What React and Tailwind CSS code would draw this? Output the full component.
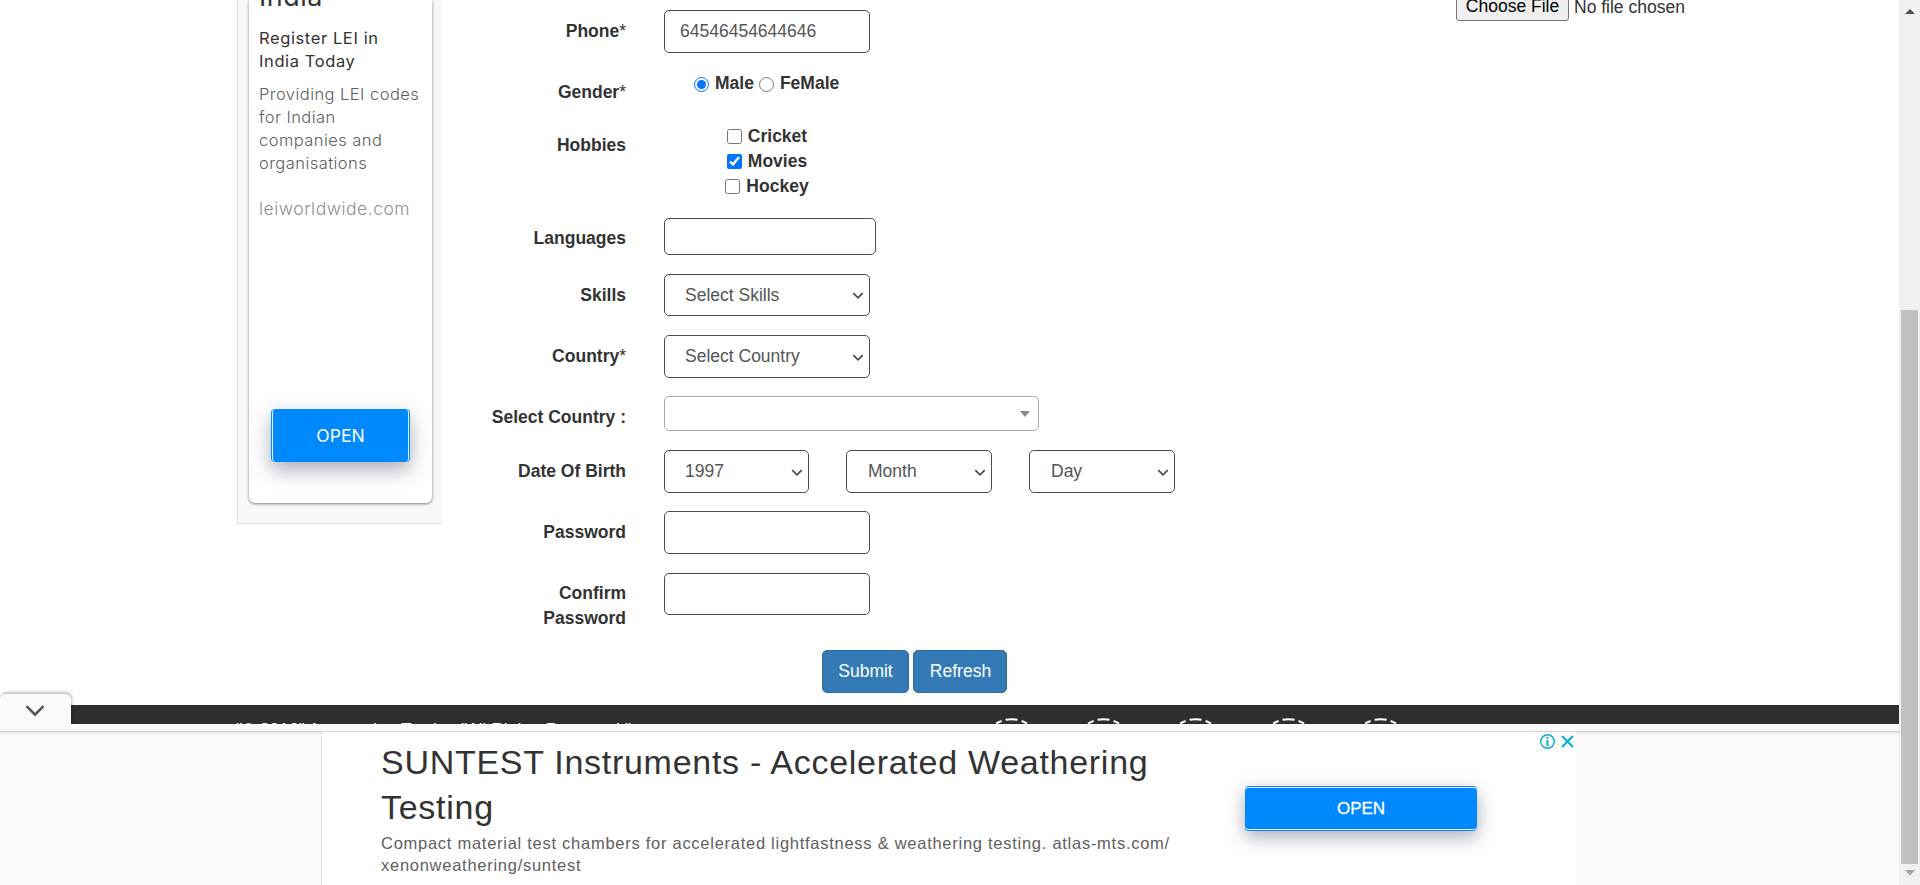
import React from "react";

function Row({ label, className, labelPad = "pt-[9px]", star, children }) {
  return (
    <div className={"flex items-start " + className}>
      <label className={"w-[150px] shrink-0 mr-[38px] text-right font-bold " + labelPad}>
        {label}
        {star && <span className="font-normal">*</span>}
      </label>
      {children}
    </div>
  );
}

function Select({ text, className }) {
  return (
    <div className={"flex items-center justify-between rounded-[5px] border border-[#4d4d4d] bg-white pl-5 pr-[5px] text-[#555] " + className}>
      <span>{text}</span>
      <svg className="mt-[2px]" width="12" height="8" viewBox="0 0 13 9" fill="none" stroke="#4d4d4d" strokeWidth="2">
        <path d="M1.2 1.3 L6.5 6.6 L11.8 1.3" />
      </svg>
    </div>
  );
}

function Field({ className, value }) {
  return (
    <input
      className={"rounded-[5px] border border-[#4d4d4d] bg-white px-[15px] text-[#555] outline-none " + className}
      defaultValue={value}
    />
  );
}

function Check({ label, checked }) {
  return (
    <label className="flex h-[25px] items-center justify-center gap-[6px] font-bold">
      <input type="checkbox" defaultChecked={checked} className="m-0 size-[15px]" />
      {label}
    </label>
  );
}

function SideAd() {
  return (
    <aside className="h-[524px] w-[205px] border-b border-l border-[#dedede] bg-[#f8f8f8] pl-[11px] font-[Inter,sans-serif]">
      <div className="flex h-[503px] w-[183px] flex-col overflow-hidden rounded-b-[6px] bg-white pl-[10px] shadow-[0_1px_3px_rgba(0,0,0,0.5)]">
        <div className="-mt-[20px] h-[34px] shrink-0 text-[27px] leading-[34px] tracking-[0.5px] text-[#333]">India</div>
        <div className="mt-[13px] text-[16.5px] leading-[23px] tracking-[0.6px] text-[#333]">
          Register LEI in
          <br />
          India Today
        </div>
        <div className="mt-[10px] whitespace-nowrap text-[16.5px] font-light leading-[23px] tracking-[0.45px] text-[#606060]">
          Providing LEI codes
          <br />
          for Indian
          <br />
          companies and
          <br />
          organisations
        </div>
        <div className="mt-[22px] text-[17.5px] font-light leading-[24px] tracking-[0.5px] text-[#909090]">leiworldwide.com</div>
        <div className="ml-[12px] mt-[188px] flex h-[53px] w-[139px] shrink-0 rounded-[4px] bg-[#0088ff] px-[1px] shadow-[0_8px_20px_rgba(40,50,80,0.4)]">
          <div className="flex w-full items-center justify-center rounded-[4px] border-x border-white/90 pt-px text-[17.5px] text-white">OPEN</div>
        </div>
      </div>
    </aside>
  );
}

function Form() {
  return (
    <form className="ml-[34px] w-[930px] pt-[10px] text-[17.5px] leading-[25px] text-[#333]">
      <Row label="Phone" star className="h-[61px]">
        <Field className="h-[43px] w-[206px]" value="64546454644646" />
      </Row>
      <Row label="Gender" star className="h-[53px]">
        <div className="flex pl-[30px] font-bold">
          <label className="flex h-[25px] items-center gap-[6px]">
            <input type="radio" name="gender" defaultChecked className="m-0 mt-[1px] size-[15px]" />
            Male
          </label>
          <label className="ml-[5px] flex h-[25px] items-center gap-[6px]">
            <input type="radio" name="gender" className="m-0 mt-[1px] size-[15px]" />
            FeMale
          </label>
        </div>
      </Row>
      <Row label="Hobbies" className="h-[93px]">
        <div className="w-[206px]">
          <Check label="Cricket" />
          <Check label="Movies" checked />
          <Check label="Hockey" />
        </div>
      </Row>
      <Row label="Languages" className="h-[57px]">
        <div className="mt-[1px] h-[37px] w-[212px] rounded-[5px] border border-[#4d4d4d]" />
      </Row>
      <Row label="Skills" className="h-[61px]">
        <Select text="Select Skills" className="h-[42px] w-[206px]" />
      </Row>
      <Row label="Country" star className="h-[61px]">
        <Select text="Select Country" className="h-[43px] w-[206px]" />
      </Row>
      <Row label="Select Country :" className="h-[54px]">
        <div className="flex h-[35px] w-[375px] items-center justify-end rounded-[5px] border border-[#aaa] pr-[8px]">
          <svg width="10" height="6" viewBox="0 0 10 6" fill="#888">
            <path d="M0 0h10L5 6z" />
          </svg>
        </div>
      </Row>
      <Row label="Date Of Birth" className="h-[61px]">
        <Select text="1997" className="h-[43px] w-[145px]" />
        <Select text="Month" className="ml-[37px] h-[43px] w-[146px] pl-[21px]" />
        <Select text="Day" className="ml-[37px] h-[43px] w-[146px] pl-[21px]" />
      </Row>
      <Row label="Password" className="h-[62px]">
        <Field className="h-[43px] w-[206px]" />
      </Row>
      <Row label={<>Confirm<br />Password</>} labelPad="pt-[8px]" className="h-[77px]">
        <Field className="h-[42px] w-[206px]" />
      </Row>
      <div className="ml-[346px] flex gap-[4px] text-white">
        <button type="button" className="h-[43px] w-[87px] rounded-[5px] border border-[#2e6da4] bg-[#337ab7]">Submit</button>
        <button type="button" className="h-[43px] w-[94px] rounded-[5px] border border-[#2e6da4] bg-[#337ab7] pl-[1px]">Refresh</button>
      </div>
    </form>
  );
}

function Footer() {
  return (
    <footer className="flex h-[19px] w-[1899px] overflow-hidden bg-[#2e2e2e]">
      <div className="ml-[236px] mt-[12px] w-[749px] shrink-0 whitespace-nowrap text-[17.4px] leading-[25px] text-white">
        "© 2016" Automation Testing "All Rights Reserved."
      </div>
      <div className="flex shrink-0 gap-[42px] pt-[13px]">
        {[0, 1, 2, 3, 4].map((i) => (
          <svg key={i} className="h-[50px] w-[50.2px]" viewBox="0 0 50 50" fill="none" stroke="#fff" strokeWidth="2">
            <path d="M20.5 1.8 Q26.5 .6 32.5 1.8 M11 5.6 Q13.5 3.9 16.5 3 M42 5.6 Q39.5 3.9 36.5 3" />
          </svg>
        ))}
      </div>
    </footer>
  );
}

function BottomAd() {
  return (
    <section className="relative h-[161px] w-[1899px] bg-[#fafafa]">
      <div className="h-[8px] border-b border-[#d2d2d2] shadow-[0_1px_2px_rgba(0,0,0,0.12)]" />
      <div className="absolute left-0 top-[-31px] flex h-[33px] w-[71px] items-center justify-center rounded-t-[6px] border-t border-[#ccc] bg-[#fafafa] pt-[2px] shadow-[1px_-1px_3px_rgba(0,0,0,0.25)]">
        <svg className="mr-[1px]" width="20" height="12" viewBox="0 0 20 12" fill="none" stroke="#555" strokeWidth="2.6">
          <path d="M1.5 1.2 L10 9.7 L18.5 1.2" />
        </svg>
      </div>
      <div className="absolute left-0 top-0 h-[6px] w-[90px] bg-[#fafafa]" />
      <div className="ml-[321px] flex h-[153px] w-[1255px] border-l border-[#e2e2e2] bg-white">
        <div className="w-[863px] pl-[59px] pt-[8px]">
          <h2 className="whitespace-nowrap text-[34px] leading-[45px] tracking-[0.72px] text-[#333]">
            SUNTEST Instruments - Accelerated Weathering
            <br />
            Testing
          </h2>
          <p className="mt-[2px] whitespace-nowrap text-[16.5px] leading-[22px] tracking-[0.73px] text-[#606060]">
            Compact material test chambers for accelerated lightfastness &amp; weathering testing. atlas-mts.com/
            <br />
            xenonweathering/suntest
          </p>
        </div>
        <div className="ml-[60px] mt-[54px] h-[45px] w-[232px] rounded-[4px] bg-[#0088ff] py-[1px] shadow-[0_6px_18px_rgba(40,50,80,0.4)]">
          <div className="flex h-full items-center justify-center rounded-[4px] border-y border-white text-[17px] text-white [-webkit-text-stroke:0.3px_white]">OPEN</div>
        </div>
        <div className="ml-[62px] mt-[1px] flex gap-[4px]">
          <svg width="17" height="17" viewBox="0 0 17 17" fill="none" stroke="#00aecd" strokeWidth="1.4">
            <circle cx="8.5" cy="8.5" r="6.8" />
            <path d="M8.5 7 V13 M8.5 4 V5.8" strokeWidth="2" />
          </svg>
          <svg width="15" height="17" viewBox="0 0 15 17" fill="none" stroke="#00aecd" strokeWidth="2">
            <path d="M2 3 L13 14 M13 3 L2 14" />
          </svg>
        </div>
      </div>
    </section>
  );
}

function Scrollbar() {
  return (
    <div className="flex h-[885px] w-[21px] shrink-0 flex-col items-center bg-[#f0f0f0]">
      <svg className="mt-[9px]" width="10" height="5" viewBox="0 0 10 5" fill="#505050">
        <path d="M0 5h10L5 0z" />
      </svg>
      <div className="mt-[296px] h-[554px] w-[17px] bg-[#c1c1c1]" />
      <svg className="mt-[6px]" width="10" height="6" viewBox="0 0 10 6" fill="#a3a3a3">
        <path d="M0 0h10L5 5.5z" />
      </svg>
    </div>
  );
}

export default function App() {
  return (
    <div className="flex h-[885px] w-[1920px] overflow-hidden bg-white font-['Liberation_Sans',Arial,sans-serif]">
      <main className="w-[1899px]">
        <div className="flex h-[705px] items-start overflow-hidden pl-[237px]">
          <SideAd />
          <Form />
          <div className="ml-[50px] -mt-[8px] flex items-start text-[17.5px] text-[#333]">
            <div className="flex h-[29px] w-[113px] items-center justify-center rounded-[3px] border border-[#767676] bg-[#efefef] text-black">Choose File</div>
            <span className="ml-[5px] leading-[30px]">No file chosen</span>
          </div>
        </div>
        <Footer />
        <BottomAd />
      </main>
      <Scrollbar />
    </div>
  );
}
